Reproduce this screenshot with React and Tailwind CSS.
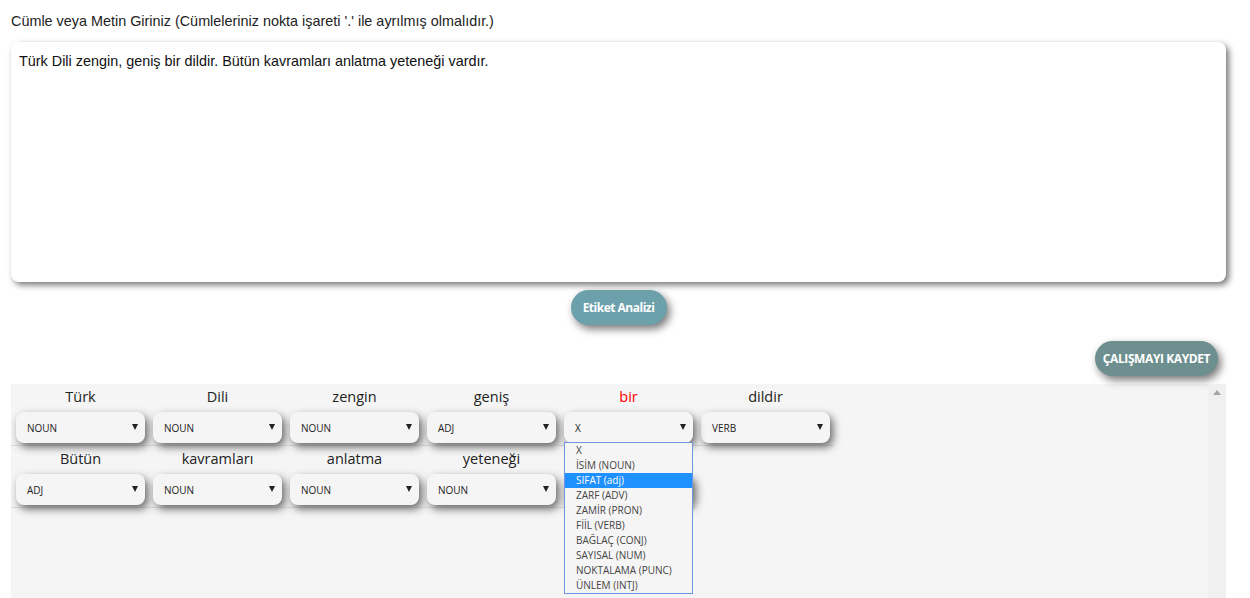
const O = { fontFamily: '"Open Sans", sans-serif' };
const A = { fontFamily: '"Liberation Sans", Arial, sans-serif' };

const rows = [
  [["Türk", "NOUN"], ["Dili", "NOUN"], ["zengin", "NOUN"], ["geniş", "ADJ"], ["bir", "X", true], ["dildir", "VERB"]],
  [["Bütün", "ADJ"], ["kavramları", "NOUN"], ["anlatma", "NOUN"], ["yeteneği", "NOUN"], ["", ""]],
];
const options = ["X", "İSİM (NOUN)", "SIFAT (adj)", "ZARF (ADV)", "ZAMİR (PRON)", "FİİL (VERB)", "BAĞLAÇ (CONJ)", "SAYISAL (NUM)", "NOKTALAMA (PUNC)", "ÜNLEM (INTJ)"];

function Cell({ word, value, red, open }) {
  return (
    <div className={`w-[137px] shrink-0 pl-[5px] pr-[3px] ${open ? "relative z-10" : ""}`}>
      <div className={`h-[28px] text-center text-[14.5px] font-medium leading-[26px] ${red ? "text-[#ff0000]" : "text-[#222]"}`}>{word}</div>
      <div className="flex h-[31px] w-[129px] items-center justify-between rounded-[8px] bg-[#f5f5f5] pl-[11px] pr-[7px] pt-[1px] text-[10px] font-medium text-[#222] shadow-[3px_4px_8px_#666]">
        <span>{value}</span>
        <span className="mb-[3px] h-0 w-0 border-x-[3.5px] border-t-[6px] border-x-transparent border-t-[#222]" />
      </div>
      {open && (
        <div className="absolute left-[5px] top-[58px] w-[129px] border border-[#6f94e0] bg-[#f5f5f5] text-[10px] leading-[15px] text-[#444]">
          {options.map((o, i) => (
            <div key={o} className={`h-[15px] pl-[11px] ${i === 2 ? "bg-[#1e90ff] text-white" : ""}`}>{o}</div>
          ))}
        </div>
      )}
    </div>
  );
}

export default function App() {
  return (
    <div className="h-[598px] overflow-hidden bg-white pl-[11px] pr-[24px]" style={A}>
      <div className="pt-[13px] text-[14.4px] leading-[16px] text-[#222]">Cümle veya Metin Giriniz (Cümleleriniz nokta işareti '.' ile ayrılmış olmalıdır.)</div>
      <div className="mt-[13px] h-[240px] rounded-[8px] bg-white px-[8px] pt-[11px] text-[14.4px] leading-[17px] text-[#111] shadow-[3px_3px_6px_#777]">
        Türk Dili zengin, geniş bir dildir. Bütün kavramları anlatma yeteneği vardır.
      </div>
      <div className="mt-[8px] flex justify-center">
        <div className="flex h-[35px] w-[96px] items-center justify-center rounded-[18px] bg-[#6ca0ab] text-[12px] font-bold tracking-[-0.5px] text-white shadow-[3px_4px_9px_#777]" style={O}>Etiket Analizi</div>
      </div>
      <div className="mt-[16px] flex justify-end pr-[8px]">
        <div className="flex h-[35px] w-[123px] items-center justify-center rounded-[18px] bg-[#6d8f8f] text-[12px] font-bold tracking-[-0.4px] text-white shadow-[3px_4px_9px_#777]" style={O}>ÇALIŞMAYI KAYDET</div>
      </div>
      <div className="mt-[8px] flex h-[300px] bg-[#f5f5f5]" style={O}>
        <div className="relative min-w-0 flex-1">
          {rows.map((r, i) => (
            <div key={i} className="flex h-[62px] w-fit border-b border-[#ddd]">
              {r.map(([w, v, red]) => <Cell key={w + v} word={w} value={v} red={red} open={red} />)}
            </div>
          ))}
        </div>
        <div className="flex w-[18px] shrink-0 justify-center bg-[#f0f0f0] pt-[6px]">
          <span className="h-0 w-0 border-x-[4px] border-b-[5px] border-x-transparent border-b-[#a3a3a3]" />
        </div>
      </div>
    </div>
  );
}
